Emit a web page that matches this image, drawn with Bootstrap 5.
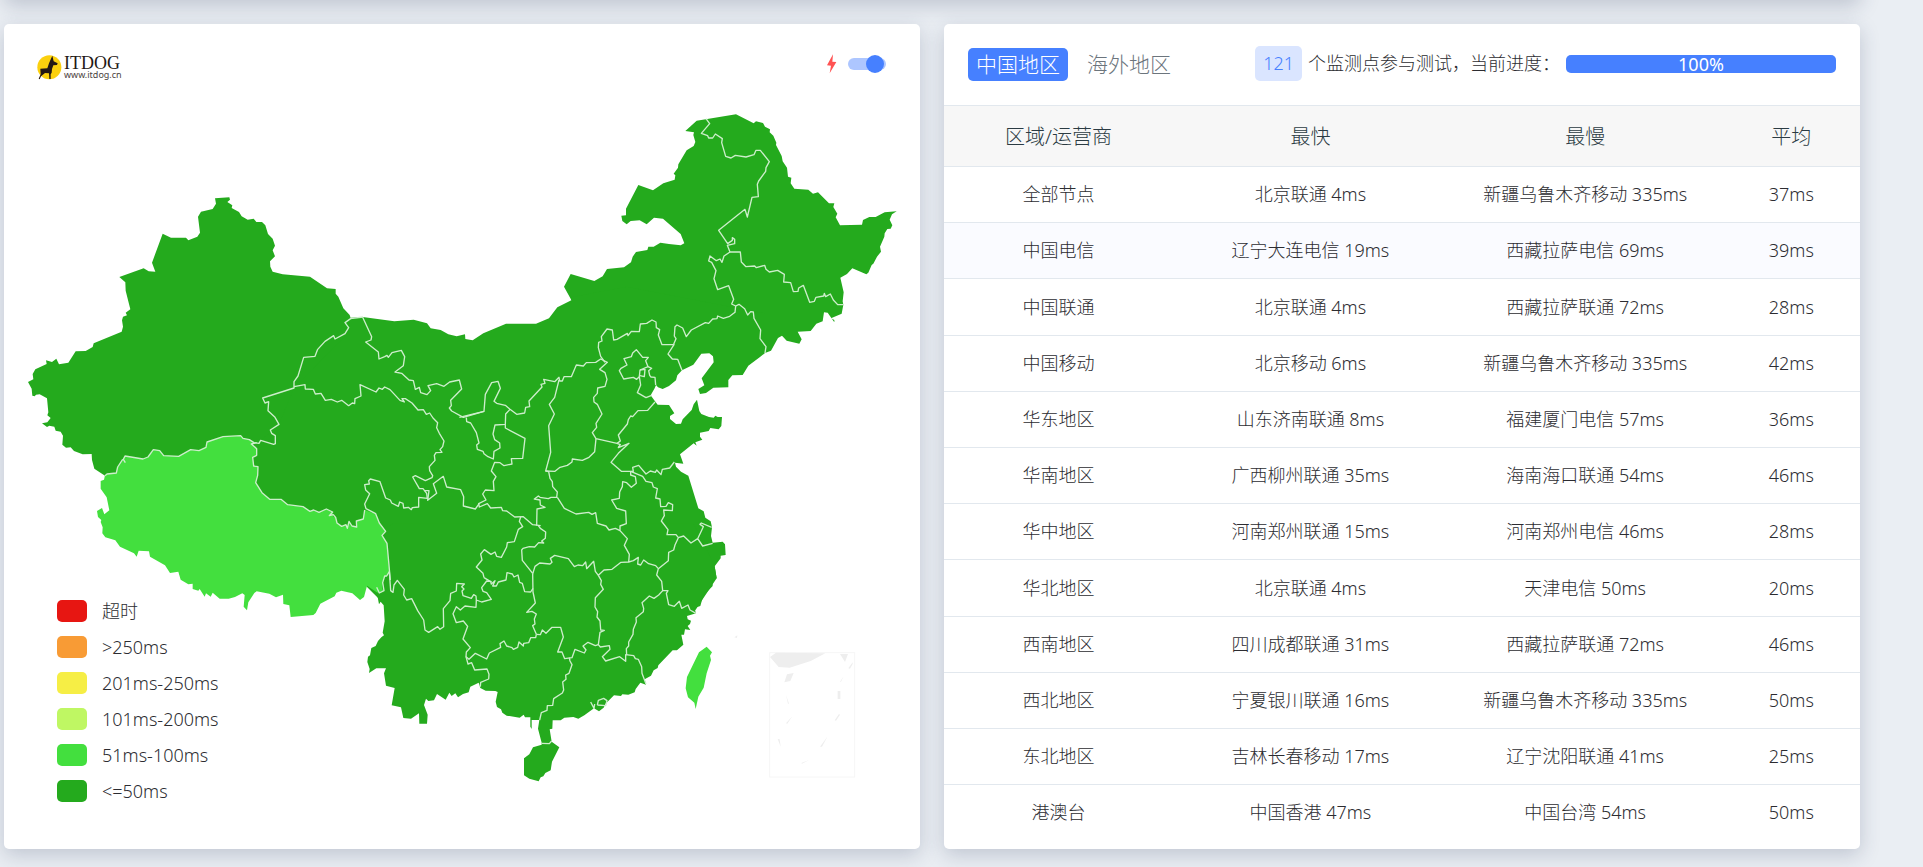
<!DOCTYPE html>
<html lang="zh-CN">
<head>
<meta charset="utf-8">
<meta name="viewport" content="width=device-width, initial-scale=1">
<title>ITDOG</title>
<link href="https://cdn.jsdelivr.net/npm/bootstrap@5.3.0/dist/css/bootstrap.min.css" rel="stylesheet">
<style>
  body { background: #eaeef3; color: #2c2c31; font-family: "Noto Sans", "Noto Sans CJK SC", sans-serif; font-size: 18px; font-weight: 300; line-height: 27px; }
  .page { padding: 0 63px 18px 4px; overflow: hidden; }
  .panel { background: #fff; border: 0; border-radius: 5px; box-shadow: 0 6px 20px rgba(40, 55, 90, .22); }
  .panel-above { height: 60px; margin-top: -60px; }
  .two-up { display: grid; grid-template-columns: 1fr 1fr; gap: 24px; margin-top: 24px; }

  .map-panel { display: grid; grid-template-columns: minmax(0, 1fr); }
  .map-panel > * { grid-area: 1 / 1; }
  .china { display: block; width: 100%; height: auto; }
  .lines { fill: none; stroke: #cdeecb; stroke-width: 4; stroke-linejoin: round; }
  .map-top { padding: 30px 34px 0 33px; align-self: start; }
  .brand { gap: 2px; }
  .brand-name { font: 18px/15px "Liberation Serif", serif; color: #231815; }
  .brand-url { font: 9px/8px "Noto Sans", sans-serif; color: #4a4340; }
  .speed-switch { appearance: none; width: 38px; height: 12px; margin: 0; border-radius: 6px; background: #adc6ff; display: flex; align-items: center; justify-content: flex-end; padding-right: 2px; cursor: pointer; }
  .speed-switch::before { content: ""; width: 18px; height: 18px; border-radius: 50%; background: #4680ff; }
  .legend-list { align-self: end; justify-self: start; padding: 0 0 40px 53px; margin: 0; list-style: none; }
  .legend-list li { display: flex; align-items: center; gap: 15px; height: 36px; }
  .swatch { width: 30px; height: 22px; border-radius: 5px; }

  .result-head { height: 81px; padding: 22px 24px 0; }
  .tab-group { padding-top: 2px; gap: 11px; }
  .tab-btn { border: 0; border-radius: 5px; padding: 0 8px; height: 33px; background: none; color: #6c757d; font-size: 21px; line-height: 33px; font-weight: 300; }
  .tab-btn.active { background: #4680ff; color: #fff; }
  .count-chip { background: #dae5ff; color: #4680ff; border-radius: 5px; padding: 0 8px; line-height: 35px; }
  .task-status { gap: 6px; }
  .progress.task-progress { width: 270px; height: 18px; border-radius: 5px; font-size: 18px; overflow: visible; --bs-progress-bar-bg: #4680ff; }
  .task-progress .progress-bar { overflow: visible; border-radius: 5px; line-height: 18px; font-weight: 400; }
  .result-table { --bs-table-bg: transparent; --bs-table-color: #2c2c31; height: 735px; margin: 0 0 9px; table-layout: fixed; text-align: center; border-color: #e2e8ee; }
  .result-table > :not(caption) > * > * { border-width: 1px 0 0; padding: 0 4px; }
  .result-table > thead > tr > th { background: #f7f7f7; color: #2b3b43; font-size: 20px; font-weight: 300; height: 61px; vertical-align: middle; }
  .result-table tr.is-active > td { background: #fafbff; }
  .c-25 { width: 25%; } .c-30 { width: 30%; } .c-15 { width: 15%; }
</style>
</head>
<body>
<div class="page">
  <div class="panel panel-above"></div>
  <main class="two-up">
    <section class="panel map-panel">
      <svg class="china" viewBox="12 72 2748 2475" role="img" aria-label="中国地区">
        <!-- land -->
        <g fill="#24aa1d">
          <path transform="translate(1680 300)" d="M34 600 12 560 32 522 103 543 128 529 141 507 192 502 213 487 218 470 228 456 262 450 265 440 281 440 301 428 327 432 362 436 373 430 362 402 309 356 282 353 260 373 239 361 212 363 200 373 187 363 184 347 198 346 198 326 235 255 279 271 310 250 344 239 346 226 341 221 354 203 355 193 380 151 401 138 406 126 400 105 402 97 376 93 410 62 528 43 581 70 588 64 609 69 615 80 630 88 629 97 640 107 649 128 648 135 665 168 668 184 681 203 684 230 694 233 692 250 703 266 745 269 759 281 774 277 807 310 823 310 820 321 832 341 827 352 840 376 906 374 909 360 928 351 947 351 974 337 1010 334 996 343 989 359 997 376 992 386 982 387 974 400 973 410 960 440 963 455 951 470 940 491 935 495 925 518 919 523 877 505 861 522 841 533 851 577 848 604 850 614 845 641 813 655 823 660 823 667 803 638 792 637 788 664 769 671 752 693 713 695 725 718 718 731 680 722 666 707 654 714 633 752 615 759 500 700z"/>
          <path transform="translate(1080 840)" d="M-27 113 8 111 103 124 161 119 201 130 212 145 242 150 265 163 290 169 315 163 316 177 338 181 370 160 438 131 528 131 567 115 592 82 634 61 633 52 800 20 1215 100 1215 219 1200 231 1165 257 1148 285 1117 286 1105 300 1105 322 1060 323 1038 339 1020 342 1015 327 1033 316 1025 295 1061 247 1059 229 1048 220 1024 221 1000 254 966 271 952 286 948 301 927 318 908 327 894 322 888 315 884 325 872 346 885 364 893 374 927 375 943 400 930 408 930 417 948 432 963 431 968 418 995 390 1001 373 1011 359 1018 393 1024 402 1047 411 1061 413 1066 407 1073 411 1086 411 1084 438 1076 448 1051 444 1046 453 1020 458 1020 470 1027 479 1006 487 1010 497 1001 490 960 523 970 551 945 548 948 560 963 575 985 587 1015 685 1031 694 1036 713 1052 724 1056 742 1053 768 1058 788 1088 785 1095 793 1097 825 1082 827 1082 835 1064 859 1070 895 1000 1000 100 1000 0 900 -80 880 -480 660 -480 410 -80 160z"/>
          <path transform="translate(1080 1620)" d="M1064 79 1070 115 1057 116 1058 138 1040 157 1035 156 1026 180 1021 198 1003 204 1008 220 981 228 983 238 993 242 990 252 983 258 991 270 975 268 972 284 964 284 970 314 951 331 938 331 895 376 893 384 881 391 873 407 854 418 858 434 841 428 827 447 824 457 805 464 787 463 783 468 762 466 736 492 731 503 717 514 702 505 673 526 655 536 640 531 613 533 602 541 578 541 577 566 569 568 575 605 598 622 576 665 572 691 556 699 550 709 542 712 536 724 508 716 492 706 492 655 508 643 519 622 545 614 545 608 534 566 538 540 515 540 515 567 511 560 511 532 495 532 491 524 479 533 440 527 427 518 423 508 411 501 407 485 413 456 406 453 377 452 361 444 356 428 331 440 326 457 309 462 294 472 286 460 275 468 268 458 257 479 231 462 222 481 205 483 198 476 192 495 203 524 201 551 178 551 177 520 153 536 130 534 123 502 95 496 104 444 78 437 72 400 78 385 49 385 27 399 29 387 22 366 24 350 30 346 34 324 47 318 54 303 64 292 72 286 68 278 74 244 71 196 62 185 57 193 49 150 20 0 100 -50 1000 -50z"/>
          <path transform="translate(0 540)" d="M84 606 100 598 98 582 106 568 140 552 138 541 156 546 169 536 177 553 205 548 227 514 257 513 278 501 281 490 365 455 369 440 366 421 369 410 381 406 377 398 391 388 377 332 376 307 358 291 431 265 446 274 466 275 456 248 488 161 513 173 558 173 565 181 592 170 600 158 594 110 603 95 638 87 648 71 645 55 688 52 690 59 682 66 697 76 695 84 717 96 725 109 743 119 761 116 769 126 786 126 796 136 804 162 818 176 825 197 818 211 825 229 810 244 811 260 818 275 848 283 930 290 981 325 1007 327 1007 341 1015 350 1030 385 1049 405 1052 414 1035 470 882 624 837 733 762 800 618 860 400 870 349 885 321 886 315 887 283 866 276 840 275 822 248 823 222 813 212 802 198 803 187 794 189 767 182 755 167 752 163 740 148 737 141 741 126 730 142 727 152 714 142 706 145 697 141 655 119 643 108 644 104 649 97 647 95 626z"/>
        </g>
        <g fill="#43df3e">
          <path transform="translate(0 1320)" d="M315 106 321 102 349 99 353 81 375 48 429 57 444 51 460 29 479 32 491 47 536 49 572 29 597 32 618 22 621 6 669 -10 722 -13 729 -5 748 -1 762 8 754 12 760 17 770 26 770 46 758 52 761 78 774 80 773 106 767 128 786 158 809 178 843 178 863 194 909 200 930 214 941 210 957 217 979 207 998 216 1000 230 1007 232 1011 249 1025 259 1038 254 1042 265 1047 244 1056 258 1070 261 1069 243 1090 237 1094 210 1127 222 1136 246 1157 274 1146 288 1161 310 1168 395 1160 408 1150 415 1146 440 1149 452 1138 458 1130 457 1101 437 1092 471 1080 480 1057 460 1024 452 1009 458 1004 469 961 491 947 519 940 525 872 531 868 496 850 492 849 464 828 472 808 461 770 454 763 459 745 487 741 511 731 500 734 465 727 460 705 471 686 476 659 476 638 458 632 470 618 460 614 470 599 447 595 452 578 447 578 431 565 433 542 419 535 395 510 399 495 376 450 350 447 334 416 332 410 350 402 340 360 320 346 301 316 292 307 280 308 262 302 246 304 240 294 231 291 213 306 204 313 223 328 211 320 172 302 146 302 123 312 119z"/>
          <path transform="translate(1080 1620)" d="M1040 320 1056 337 1050 347 1053 360 1040 400 1031 443 1015 470 1007 507 1003 488 984 472 977 445 981 411 1017 337z"/>
        </g>
        <!-- province borders: north-west -->
        <g class="lines" transform="translate(0 540)">
          <path d="M1089 411 1052 416 1035 428 1046 443 1035 461 1005 477 1001 467 975 484 953 508 945 529 911 532 894 588 882 605 882 624 788 654 795 669 806 665 804 692 825 712 837 733 811 750 815 760 826 767 826 791 821 793 782 781 777 790 762 788 748 779 729 775 722 767 669 770 621 786 618 802 597 812 572 809 536 829 491 827 479 812 460 809 444 831 429 837 375 828 370 838 376 848M368 838 353 861 349 879 321 882 315 887"/>
        </g>
        <g class="lines" transform="translate(0 1320)">
          <path d="M770 8 754 12 760 17 770 26 770 46 758 52 761 78 774 80 773 106 767 128 786 158 809 178 843 178 863 194 909 200 930 214 941 210 957 217 979 207 998 216 988 227 1000 224 1007 232 1011 249 1025 259 1038 254 1042 265 1047 244 1056 258 1070 261 1069 243 1090 237 1094 210"/>
          <path d="M1168 395 1160 408 1154 408 1148 428 1152 452 1138 459 1130 442"/>
        </g>
        <g class="lines" transform="translate(720 840)">
          <path d="M368 112 395 170 393 180 377 186 415 216 417 237 434 230 441 226 445 232 456 218 484 211 494 230 490 257 465 276 485 280 507 300 520 302 526 328 538 322 542 338 561 344 572 332 564 317 590 311 612 319 629 306 658 300 665 327 632 361 634 377 628 384 635 393 670 412 732 394"/>
          <path d="M162 320 195 314 196 327 220 328 226 342 243 340 256 361 274 358 292 366 305 361 326 377 337 369 344 371 345 356 363 348 360 314 408 336 417 324 427 328 434 321 450 329 480 361 493 366 486 356 496 356 516 369 534 390 550 389 559 403 569 399 579 414 593 428 590 443 598 460 612 483 608 500 600 509 606 517 588 518 583 526 585 541 568 560 569 572 578 587 576 593 556 602 526 587 518 591 538 626 549 626 560 640 562 655 536 652 536 681 517 683 514 689 505 682 491 684 489 670 479 666 475 679 455 669 451 660 437 654 420 605 391 597 386 602 388 612 374 614 377 630 389 641 374 672 378 686 407 701 418 729 437 754 426 766 441 790 451 900"/>
          <path d="M552 632 567 632 563 661 590 640 580 611 610 589 620 621 662 629 671 650 670 678 706 687 718 670"/>
        </g>
        <!-- province borders: centre and east -->
        <g class="lines" transform="translate(1080 840)">
          <path d="M298 412 372 394 376 343 395 308 414 304 421 325 402 364 410 370 436 376 450 388 470 403 494 399 497 382 509 380 507 363 546 321 543 313 555 310 551 298 584 305 597 292 599 303 607 303 612 290 634 290 649 255 670 258 679 248 707 247 722 237 742 247 719 268 735 278 741 298 735 319 713 324 712 340 701 352 702 366 712 373 726 402 708 430 710 442 697 458 708 476 771 490 781 483 775 465 802 432 805 419 812 408 818 410 834 392 863 391 885 366"/>
          <path d="M450 388 437 402 436 433 405 435 399 462 404 479 419 489 420 504 402 514 400 537 384 530 372 521 369 514 352 508 350 495 357 489 349 458 332 429 320 425 319 413"/>
          <path d="M436 433 436 444 495 475 488 535 454 536 456 552 432 557 420 548 404 547 394 573 408 590 400 604 402 632 376 630 368 642 378 660 356 671 358 681 382 671 392 684 424 682 428 692 440 693 464 711 490 710 518 734 542 737"/>
          <path d="M597 300 584 352 568 373 583 402 566 437 572 517 557 573 566 575 570 595 577 605 578 620 592 636 590 652 573 652 565 656 540 652 535 648 523 657 540 660 541 675 555 682 531 687 530 737"/>
          <path d="M557 573 585 574 600 562 622 556 636 546 637 537 667 541 687 532 704 515 708 476"/>
          <path d="M735 247 722 229 715 203 716 187 726 183 724 170 741 147 757 150 761 180 771 178 802 160 804 167 814 154 838 155 841 132 860 130 876 120 888 126 889 143 899 149 895 165 906 194 942 194 924 222 937 237 953 238 966 271"/>
          <path d="M829 209 848 232 865 232 857 242 864 260 840 270 838 290 830 298 820 292 791 297 778 272 783 265 801 255 792 236 814 230 818 219z"/>
          <path d="M864 260 875 265 866 272 869 286 873 291 885 292 887 315M838 290 842 315 832 338 858 353 875 346M840 270 855 268 853 290 840 287"/>
          <path d="M771 490 781 494 775 503 807 490 775 520 753 547 784 574 820 574 818 562 836 556 858 582 871 573 886 577 890 570 903 584 907 568 929 564 943 546"/>
          <path d="M812 574 848 589 858 604 876 608 880 621 892 626 887 654 900 657 902 680 918 679 925 668 938 674 937 692 911 690 913 707 904 723 924 749 921 764 948 764 955 773 945 795 941 810 926 817 925 842 895 866"/>
          <path d="M955 773 971 768 993 789 1013 776 1028 798 1058 790M1013 776 1030 740 1020 733 1024 729 1055 742"/>
          <path d="M812 574 812 585 826 590 829 610 814 622 800 608 788 605 787 620 779 636 778 655 755 660 770 685 797 693 799 731 780 738 780 752 802 776 793 796 808 823 806 846"/>
          <path d="M592 652 613 685 648 702 686 697 696 703 707 698 712 730 738 738 747 750 766 745 780 752"/>
          <path d="M535 737 541 745 557 756 556 775 545 783 551 789 536 788 524 801 508 800 489 805 485 810 487 841 518 880"/>
          <path d="M482 711 478 724 488 740 475 748 463 785 442 788 440 801 424 832 410 829 405 816 393 823 373 809 362 822 366 840 349 861 369 880 372 893"/>
        </g>
        <!-- province borders: south -->
        <g class="lines" transform="translate(1080 1620)">
          <path d="M518 102 525 79 539 69 570 72 576 67 571 55 584 46 625 56 643 80 654 75 668 77 677 66 680 86 701 64 706 94 715 106 732 90 756 88 783 67 806 66 820 62 835 52 833 72 842 75 851 60 866 71 887 77 895 86 890 105 905 124 908 152 924 152 919 160 926 194 943 199 958 184 965 205 984 195 990 210 1008 220"/>
          <path d="M908 152 896 165 882 175 868 168 846 188 851 205 850 215 828 233 829 246 820 268 819 283 806 306 806 318 799 326 800 345"/>
          <path d="M715 106 724 122 722 133 730 148 706 173 705 201 713 215 711 231 720 243 722 270 733 271 720 277 715 314 721 321 748 317 750 328 727 350 737 363 779 350 797 364 797 344 821 347 826 356 835 358 845 380 846 400 858 432"/>
          <path d="M715 314 706 317 684 307 669 318 678 330 673 339 645 328 636 353 614 356 606 336 593 336 610 291 602 262 576 262 558 280 547 270 541 284 529 283"/>
          <path d="M628 353 630 363 636 374 627 400 617 405 618 418 608 426 611 450 607 459 581 476 578 496 562 497 561 511 544 518 539 540"/>
          <path d="M518 102 519 156 526 189 500 217 516 214 529 222 523 237 525 252 518 257 529 283"/>
          <path d="M372 113 392 125 394 132 405 122 398 138 409 138 415 126 438 120 441 98 457 102 462 111 474 105 479 127 487 130 494 155 512 156 519 145"/>
          <path d="M395 125 380 123 365 143 369 154 380 158 394 178 365 186 349 180 348 168 341 164 334 175 309 167 306 153 312 147 305 140 313 132 290 130 289 153 272 160 270 182 250 206 251 260 240 268 233 260 206 277 195 270 191 240 173 212 155 176 140 180 131 165 133 148 112 121 102 135 99 157 92 152 88 95"/>
          <path d="M349 180 348 202 315 198 301 210 289 200 279 221 289 248 310 243 323 259 309 297 331 323 319 336 318 350 327 358 346 340 380 357 388 339 422 322 420 311 432 303 440 318 456 323 460 328 473 322 477 306 490 318 491 310 506 308 512 293 527 293 529 283"/>
          <path d="M318 350 324 372 335 368 344 390 381 387 387 403 386 417 362 427 361 440"/>
          <path d="M545 610 568 611 575 603M712 495 715 481 731 475 741 482 737 497 712 495M692 486 702 505 704 492"/>
        </g>
        <!-- province borders: north-east -->
        <g class="lines" transform="translate(1680 300)">
          <path d="M438 56 449 71 424 100 443 107 446 114 458 114 466 102 487 116 485 128 497 169 513 174 526 166 558 171 582 164 588 151 601 151 628 185 618 203 617 214 596 243 592 253 595 290 576 292 562 351 555 328 476 391 503 431 517 421 517 413 524 418 524 431 502 436 510 456 541 456 544 486 558 500 584 498 589 503 614 496 618 508 628 516 653 511 673 523 671 546 692 548 700 575 714 574 716 564 730 556 749 607 763 604 768 592 791 588 793 580 797 590 811 582 820 600 833 614 850 614"/>
          <path d="M510 456 492 468 486 487 480 477 469 482 450 468 446 483 455 487 468 512 462 536 473 569 506 557 521 598 515 612 527 618 525 637 509 649 490 655 473 648 471 656 458 657 446 670 436 668 394 690 379 710 368 684 351 675 345 680 343 708 348 716 340 735"/>
          <path d="M527 618 537 613 554 626 563 645 572 635 580 636 582 655 602 690 600 716 618 740 615 759"/>
        </g>
        <!-- South China Sea inset -->
        <g transform="translate(1980 1740)" fill="#eeeeee">
          <rect x="329" y="218" width="255" height="373" fill="none" stroke="#f6f6f6" stroke-width="3"/>
          <path d="M330 231 348 218 496 220 452 243 389 263 356 261zM540 222 564 222 555 246zM381 283 401 279 391 303 373 307zM533 333h8v24h-8zM537 402 540 404 528 422 524 421zM353 477 359 478 362 500zM503 469 486 500 480 500zM397 409 382 431 378 430zM378 345 387 371 384 371zM578 247 578 252 570 266 565 265zM551 289 543 305 540 305zM447 540 426 551 424 549zM223 172 232 166 231 174z"/>
        </g>
      </svg>
      <div class="map-top d-flex justify-content-between align-items-start">
        <div class="brand d-flex align-items-center">
          <svg width="25" height="26" viewBox="0 0 75 78" aria-hidden="true"><circle cx="37" cy="40" r="36" fill="#fbd00e"/><path d="M46 5 50 22 62 28 60 33 49 34 45 45 44 56 41 61 41 75 37 75 36 58 24 57 12 67 8 76 5 74 11 61 10 44 31 43 36 28z" fill="#231815"/></svg>
          <div><div class="brand-name">ITDOG</div><div class="brand-url">www.itdog.cn</div></div>
        </div>
        <div class="d-flex align-items-center gap-2">
          <svg width="16" height="20" viewBox="0 0 48 60" aria-hidden="true"><path d="M27 1 9 34 21 35 17 58 37 24 25 23z" fill="#ff5252"/></svg>
          <input class="speed-switch" type="checkbox" role="switch" aria-label="极速" checked>
        </div>
      </div>
      <ul class="legend-list">
        <li><span class="swatch" style="background:#e71612"></span>超时</li>
        <li><span class="swatch" style="background:#f89b35"></span>&gt;250ms</li>
        <li><span class="swatch" style="background:#f6ee45"></span>201ms-250ms</li>
        <li><span class="swatch" style="background:#bff763"></span>101ms-200ms</li>
        <li><span class="swatch" style="background:#43df3e"></span>51ms-100ms</li>
        <li><span class="swatch" style="background:#24aa1d"></span>&lt;=50ms</li>
      </ul>
    </section>

    <section class="panel">
      <div class="result-head d-flex align-items-start justify-content-between">
        <div class="tab-group d-flex align-items-center">
          <button type="button" class="tab-btn active">中国地区</button>
          <button type="button" class="tab-btn">海外地区</button>
        </div>
        <div class="task-status d-flex align-items-center text-nowrap">
          <span class="count-chip">121</span>
          <span>个监测点参与测试，当前进度：</span>
          <div class="progress task-progress" role="progressbar" aria-label="当前进度" aria-valuenow="100" aria-valuemin="0" aria-valuemax="100"><div class="progress-bar" style="width:100%">100%</div></div>
        </div>
      </div>
      <table class="table result-table align-middle">
        <thead><tr><th class="c-25">区域/运营商</th><th class="c-30">最快</th><th class="c-30">最慢</th><th class="c-15">平均</th></tr></thead>
        <tbody>
          <tr><td>全部节点</td><td>北京联通 4ms</td><td>新疆乌鲁木齐移动 335ms</td><td>37ms</td></tr>
          <tr class="is-active"><td>中国电信</td><td>辽宁大连电信 19ms</td><td>西藏拉萨电信 69ms</td><td>39ms</td></tr>
          <tr><td>中国联通</td><td>北京联通 4ms</td><td>西藏拉萨联通 72ms</td><td>28ms</td></tr>
          <tr><td>中国移动</td><td>北京移动 6ms</td><td>新疆乌鲁木齐移动 335ms</td><td>42ms</td></tr>
          <tr><td>华东地区</td><td>山东济南联通 8ms</td><td>福建厦门电信 57ms</td><td>36ms</td></tr>
          <tr><td>华南地区</td><td>广西柳州联通 35ms</td><td>海南海口联通 54ms</td><td>46ms</td></tr>
          <tr><td>华中地区</td><td>河南郑州联通 15ms</td><td>河南郑州电信 46ms</td><td>28ms</td></tr>
          <tr><td>华北地区</td><td>北京联通 4ms</td><td>天津电信 50ms</td><td>20ms</td></tr>
          <tr><td>西南地区</td><td>四川成都联通 31ms</td><td>西藏拉萨联通 72ms</td><td>46ms</td></tr>
          <tr><td>西北地区</td><td>宁夏银川联通 16ms</td><td>新疆乌鲁木齐移动 335ms</td><td>50ms</td></tr>
          <tr><td>东北地区</td><td>吉林长春移动 17ms</td><td>辽宁沈阳联通 41ms</td><td>25ms</td></tr>
          <tr><td>港澳台</td><td>中国香港 47ms</td><td>中国台湾 54ms</td><td>50ms</td></tr>
        </tbody>
      </table>
    </section>
  </main>
</div>
<script src="https://cdn.jsdelivr.net/npm/bootstrap@5.3.0/dist/js/bootstrap.bundle.min.js"></script>
</body>
</html>
